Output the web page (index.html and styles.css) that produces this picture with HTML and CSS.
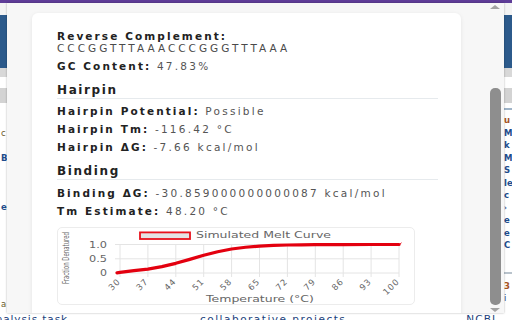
FILE: index.html
```html
<!DOCTYPE html>
<html>
<head>
<meta charset="utf-8">
<link rel="stylesheet" href="styles.css">
</head>
<body>
<div class="site">
  <div class="site-topbar"></div>
  <div class="site-gap"></div>
  <div class="site-header"></div>
  <div class="site-strip"></div>
  <div class="site-gap2"></div>
  <div class="site-band"></div>
  <div class="site-main">
    <div class="site-col left">
      <div class="ln">&nbsp;</div>
      <div class="ln">&nbsp;</div>
      <div class="ln plain">c</div>
      <div class="ln">&nbsp;</div>
      <div class="ln">B</div>
      <div class="ln">&nbsp;</div>
      <div class="ln">&nbsp;</div>
      <div class="ln">&nbsp;</div>
      <div class="ln">er</div>
      <div class="ln">&nbsp;</div>
      <div class="ln">&nbsp;</div>
      <div class="ln">&nbsp;</div>
      <div class="ln">&nbsp;</div>
      <div class="ln">&nbsp;</div>
      <div class="ln">&nbsp;</div>
      <div class="ln">&nbsp;</div>
      <div class="ln plain">a</div>
    </div>
    <div class="site-col right">
      <div class="rule"></div>
      <div class="ln warm">u</div>
      <div class="ln">M</div>
      <div class="ln">k</div>
      <div class="ln">M</div>
      <div class="ln">S</div>
      <div class="ln">le</div>
      <div class="ln">c</div>
      <div class="ln small">›</div>
      <div class="ln">e</div>
      <div class="ln">e</div>
      <div class="ln">C</div>
      <div class="rule grey"></div>
      <div class="ln warm">3</div>
      <div class="ln thin">i</div>
    </div>
  </div>
  <div class="site-footer">
    <div class="ft-left"><span>data analysis task</span></div>
    <span class="ft-mid">collaborative projects</span>
    <span class="ft-right">NCBI</span>
  </div>
</div>

<div class="popup">
  <div class="popup-scroll">
    <div class="card">
      <div class="field">
        <div class="label">Reverse Complement:</div>
        <div class="seq">CCCGGTTTAAACCCGGGTTTAAA</div>
      </div>
      <p class="stat"><b>GC Content:</b> 47.83%</p>

      <h3 class="section-title">Hairpin</h3>
      <p class="stat"><b>Hairpin Potential:</b> Possible</p>
      <p class="stat"><b>Hairpin Tm:</b> -116.42 °C</p>
      <p class="stat"><b>Hairpin ΔG:</b> -7.66 kcal/mol</p>

      <h3 class="section-title">Binding</h3>
      <p class="stat"><b>Binding ΔG:</b> -30.859000000000087 kcal/mol</p>
      <p class="stat"><b>Tm Estimate:</b> 48.20 °C</p>

      <div class="chart">
        <svg class="chart-svg" width="356" height="76" viewBox="1 1 356 76">
          <g class="grid">
            <line x1="63" y1="17.5" x2="63" y2="50"/>
            <line x1="90.9" y1="17.5" x2="90.9" y2="50"/>
            <line x1="118.8" y1="17.5" x2="118.8" y2="50"/>
            <line x1="146.7" y1="17.5" x2="146.7" y2="50"/>
            <line x1="174.6" y1="17.5" x2="174.6" y2="50"/>
            <line x1="202.5" y1="17.5" x2="202.5" y2="50"/>
            <line x1="230.4" y1="17.5" x2="230.4" y2="50"/>
            <line x1="258.3" y1="17.5" x2="258.3" y2="50"/>
            <line x1="286.2" y1="17.5" x2="286.2" y2="50"/>
            <line x1="314.1" y1="17.5" x2="314.1" y2="50"/>
            <line x1="342" y1="17.5" x2="342" y2="50"/>
            <line x1="58" y1="17.5" x2="342" y2="17.5"/>
            <line x1="58" y1="31.8" x2="342" y2="31.8"/>
            <line x1="58" y1="46" x2="342" y2="46"/>
          </g>
          <rect class="legend-box" x="83" y="5.4" width="50" height="6.6"/>
          <text class="ctext" x="139" y="11.2" textLength="135" lengthAdjust="spacingAndGlyphs">Simulated Melt Curve</text>
          <text class="ctext ytitle" x="9.5" y="31" text-anchor="middle" dominant-baseline="middle" transform="rotate(-90 9.5 31)" textLength="52" lengthAdjust="spacingAndGlyphs">Fraction Denatured</text>
          <text class="ctext" x="50" y="20.8" text-anchor="end" textLength="18" lengthAdjust="spacingAndGlyphs">1.0</text>
          <text class="ctext" x="50" y="35.1" text-anchor="end" textLength="18" lengthAdjust="spacingAndGlyphs">0.5</text>
          <text class="ctext" x="50" y="49.3" text-anchor="end" textLength="7" lengthAdjust="spacingAndGlyphs">0</text>
          <g class="xticks">
            <text class="ctext" text-anchor="end" transform="translate(64 55) rotate(-45)">30</text>
            <text class="ctext" text-anchor="end" transform="translate(91.9 55) rotate(-45)">37</text>
            <text class="ctext" text-anchor="end" transform="translate(119.8 55) rotate(-45)">44</text>
            <text class="ctext" text-anchor="end" transform="translate(147.7 55) rotate(-45)">51</text>
            <text class="ctext" text-anchor="end" transform="translate(175.6 55) rotate(-45)">58</text>
            <text class="ctext" text-anchor="end" transform="translate(203.5 55) rotate(-45)">65</text>
            <text class="ctext" text-anchor="end" transform="translate(231.4 55) rotate(-45)">72</text>
            <text class="ctext" text-anchor="end" transform="translate(259.3 55) rotate(-45)">79</text>
            <text class="ctext" text-anchor="end" transform="translate(287.2 55) rotate(-45)">86</text>
            <text class="ctext" text-anchor="end" transform="translate(315.1 55) rotate(-45)">93</text>
            <text class="ctext" text-anchor="end" transform="translate(343 55) rotate(-45)">100</text>
          </g>
          <text class="ctext" x="203" y="74.5" text-anchor="middle" textLength="108" lengthAdjust="spacingAndGlyphs">Temperature (°C)</text>
          <polyline class="curve" points="60,45.8 63,45.4 76.95,43.67 90.9,42.07 104.85,39.65 118.8,36.33 132.75,32.34 146.7,28.26 160.65,24.71 174.6,22.03 188.55,20.22 202.5,19.08 216.45,18.4 230.4,18.01 244.35,17.79 258.3,17.66 286.2,17.55 314.1,17.52 342,17.5"/>
          <polyline class="curve-end" points="341,17.8 343,17.2 344.5,15.8"/>
        </svg>
      </div>
    </div>
  </div>
  <div class="scrollbar">
    <div class="sb-up"></div>
    <div class="sb-thumb"></div>
    <div class="sb-down"></div>
  </div>
</div>
</body>
</html>
```

FILE: styles.css
```css
* { box-sizing: border-box; margin: 0; padding: 0; }

html, body { width: 512px; height: 320px; overflow: hidden; }

body {
  position: relative;
  background: #ffffff;
  font-family: "DejaVu Sans", "Liberation Sans", sans-serif;
}

/* ---------- background web page ---------- */
.site { display: flex; flex-direction: column; height: 320px; }
.site-topbar { height: 3px; background: #5f3d98; flex: none; }
.site-gap { height: 12px; background: #f3f3f3; flex: none; }
.site-header { height: 53px; background: #2c5a8b; flex: none; }
.site-strip { height: 9px; background: #d8d8d8; flex: none; }
.site-gap2 { height: 11px; flex: none; }
.site-band { height: 15px; background: #d3d3d3; flex: none; }

.site-main {
  flex: 1;
  display: flex;
  justify-content: space-between;
  overflow: hidden;
}
.site-col {
  font-size: 8.5px;
  font-weight: bold;
  line-height: 12.2px;
  color: #1e4c8c;
  white-space: nowrap;
}
.site-col.left { width: 12px; padding-left: 1px; }
.site-col.left .plain { font-weight: normal; color: #6a5a2a; }
.site-col.right { width: 8px; line-height: 12.5px; padding-top: 5px; padding-left: 0; }
.site-col .warm { color: #a5521f; }
.site-col .small { font-size: 7px; }
.site-col .thin { font-weight: normal; }
.rule { height: 2px; background: #9fb4c8; margin-bottom: 4px; }
.rule.grey { background: #b9c3cc; margin-top: 20px; margin-bottom: 6px; }

.site-footer {
  height: 7px;
  flex: none;
  display: flex;
  font-size: 10.5px;
  line-height: 12px;
  color: #1c3f7c;
  white-space: nowrap;
  overflow: visible;
}
.ft-left { width: 68px; display: flex; justify-content: flex-end; overflow: hidden; letter-spacing: 0.9px; }
.ft-mid { margin-left: 132px; letter-spacing: 1.5px; }
.ft-right { margin-left: 120px; letter-spacing: 1.1px; }

/* ---------- extension popup ---------- */
.popup {
  position: absolute;
  left: 7px;
  top: 3px;
  width: 497px;
  height: 310px;
  display: flex;
  background: #f7f7f7;
  box-shadow: 0 0 2px rgba(0, 0, 0, 0.3);
}
.popup-scroll {
  flex: 1;
  padding: 10px 25px 0 25px;
  overflow: hidden;
}
.card {
  display: flex;
  flex-direction: column;
  align-items: stretch;
  background: #ffffff;
  border-radius: 6px;
  box-shadow: 0 1px 4px rgba(0, 0, 0, 0.08);
  padding: 16.5px 23px 20px 25px;
  font-size: 10.5px;
  line-height: 12px;
  color: #555555;
  letter-spacing: 2.25px;
}
.label, .stat b { font-weight: bold; color: #222222; letter-spacing: 2.1px; }
.seq { letter-spacing: 3px; color: #4a4a4a; }
.field { margin-bottom: 6px; }
.stat { margin-bottom: 6px; white-space: nowrap; }

.section-title {
  margin-top: 5px;
  margin-bottom: 6.5px;
  padding-bottom: 1px;
  border-bottom: 1px solid #e6eaed;
  font-size: 12px;
  line-height: 14px;
  font-weight: bold;
  color: #222222;
  letter-spacing: 1.6px;
}

.chart {
  width: 358px;
  height: 78px;
  margin-top: 4px;
  border: 1px solid #ececec;
  border-radius: 5px;
}
.chart-svg { display: block; overflow: visible; }
.grid line { stroke: #e4e4e4; stroke-width: 1; }
.legend-box { fill: #e4e4e4; stroke: #e8111b; stroke-width: 1.8; }
.ctext {
  font-family: "DejaVu Sans", "Liberation Sans", sans-serif;
  font-size: 8.5px;
  fill: #666666;
  letter-spacing: 0;
}
.ctext.ytitle { font-size: 8px; }
.xticks .ctext { font-size: 8.5px; letter-spacing: 1px; }
.curve {
  fill: none;
  stroke: #e3000f;
  stroke-width: 3.2;
  stroke-linejoin: round;
  stroke-linecap: round;
}
.curve-end { fill: none; stroke: #e3000f; stroke-width: 1; }

/* ---------- scrollbar ---------- */
.scrollbar {
  width: 18px;
  display: flex;
  flex-direction: column;
  align-items: center;
  background: #f7f7f7;
}
.sb-up {
  margin-top: 2px;
  width: 0;
  height: 0;
  border-left: 5px solid transparent;
  border-right: 5px solid transparent;
  border-bottom: 4px solid #a3a3a3;
}
.sb-thumb {
  margin-top: 79px;
  width: 11px;
  height: 217px;
  border-radius: 5px;
  background: #8e8e8e;
}
.sb-down {
  margin-top: 3px;
  width: 0;
  height: 0;
  border-left: 5px solid transparent;
  border-right: 5px solid transparent;
  border-top: 4px solid #a3a3a3;
}
```
